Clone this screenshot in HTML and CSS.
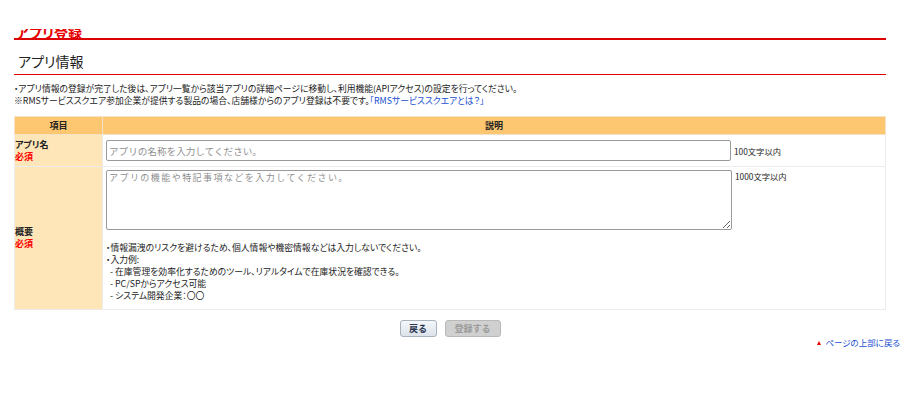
FILE: index.html
```html
<!DOCTYPE html>
<html lang="ja">
<head>
<meta charset="utf-8">
<title>アプリ登録</title>
<link rel="stylesheet" href="styles.css">
</head>
<body>
<div class="page">
  <div class="app-header"><h1 class="app-title">アプリ登録</h1></div>
  <h2 class="section-title">アプリ情報</h2>
  <div class="intro">
    <p>・アプリ情報の登録が完了した後は、アプリ一覧から該当アプリの詳細ページに移動し、利用機能(APIアクセス)の設定を行ってください。</p>
    <p>※RMSサービススクエア参加企業が提供する製品の場合、店舗様からのアプリ登録は不要です。<a class="link" href="#">「RMSサービススクエアとは？」</a></p>
  </div>
  <table class="form-table">
    <thead>
      <tr><th class="col-item">項目</th><th class="col-desc">説明</th></tr>
    </thead>
    <tbody>
      <tr class="row-name">
        <th class="label"><span class="lbl">アプリ名</span><span class="req">必須</span></th>
        <td class="field">
          <div class="field-line">
            <input class="text-input" type="text" placeholder="アプリの名称を入力してください。">
            <span class="limit">100文字以内</span>
          </div>
        </td>
      </tr>
      <tr class="row-summary">
        <th class="label"><span class="lbl">概要</span><span class="req">必須</span></th>
        <td class="field">
          <div class="field-line top">
            <textarea class="text-area" placeholder="アプリの機能や特記事項などを入力してください。"></textarea>
            <span class="limit">1000文字以内</span>
          </div>
          <ul class="notes">
            <li>・情報漏洩のリスクを避けるため、個人情報や機密情報などは入力しないでください。</li>
            <li>・入力例:</li>
            <li class="ex">- 在庫管理を効率化するためのツール、リアルタイムで在庫状況を確認できる。</li>
            <li class="ex">- PC/SPからアクセス可能</li>
            <li class="ex">- システム開発企業：〇〇</li>
          </ul>
        </td>
      </tr>
    </tbody>
  </table>
  <div class="actions">
    <button class="btn btn-back" type="button">戻る</button>
    <button class="btn btn-submit" type="button" disabled>登録する</button>
  </div>
</div>
<div class="pagetop"><a class="link" href="#"><span class="tri"></span>ページの上部に戻る</a></div>
</body>
</html>
```

FILE: styles.css
```css
html, body {
  margin: 0;
  padding: 0;
  background: #fff;
}
body {
  font-family: "Noto Sans CJK JP", "Liberation Sans", sans-serif;
  font-feature-settings: "palt";
  color: #222;
  font-size: 9px;
}
.page {
  width: 872px;
  margin-left: 14px;
}
.app-header {
  height: 9px;
  margin-top: 29px;
  overflow: hidden;
  display: flex;
  align-items: flex-end;
  border-bottom: 2px solid #dd0000;
}
.app-title {
  margin: 0 0 0 2px;
  font-size: 14px;
  line-height: 18px;
  color: #e60000;
  font-weight: bold;
  position: relative;
  top: 3px;
}
.section-title {
  margin: 0;
  padding: 12px 0 0 4px;
  height: 22px;
  font-size: 14px;
  line-height: 18px;
  font-weight: normal;
  color: #222;
  border-bottom: 1px solid #e00000;
}
.intro {
  padding-top: 8px;
}
.intro p {
  margin: 0;
  font-size: 8.8px;
  line-height: 12px;
  white-space: nowrap;
}
.link {
  color: #1a4fd0;
  text-decoration: none;
}
.form-table {
  width: 872px;
  margin-top: 9px;
  border-collapse: collapse;
  border: 1px solid #e6e6e6;
}
.form-table th, .form-table td {
  border: 1px solid #ececec;
  padding: 0;
}
.form-table thead th {
  background: #fdc670;
  font-weight: bold;
  font-size: 9px;
  height: 17px;
  line-height: 17px;
  text-align: center;
  border-color: #f3e3c6;
}
.col-item {
  width: 87px;
}
.label {
  background: #fee6b8;
  text-align: left;
  vertical-align: middle;
  font-weight: bold;
  padding: 0 0 0 4px;
}
.lbl, .req {
  display: block;
  font-size: 9px;
  line-height: 12px;
}
.row-name .label {
  vertical-align: top;
  padding-top: 4px;
}
.req {
  color: #ff0000;
}
.field {
  padding: 0 0 0 3px !important;
  vertical-align: top;
}
.row-name .field {
  height: 31px;
  vertical-align: middle;
}
.field-line {
  display: flex;
  align-items: center;
  gap: 3px;
}
.field-line.top {
  align-items: flex-start;
  padding-top: 3px;
}
.text-input {
  width: 625px;
  height: 21px;
  box-sizing: border-box;
  border: 1px solid #9a9a9a;
  border-radius: 2px;
  padding: 0 2px;
  font-family: "Noto Sans CJK JP", sans-serif;
  font-size: 9.6px;
  color: #333;
  margin: 0;
}
.text-area {
  width: 626px;
  height: 60px;
  box-sizing: border-box;
  border: 1px solid #9a9a9a;
  border-radius: 2px;
  padding: 1px 2px;
  font-family: "Noto Sans CJK JP", sans-serif;
  font-size: 9px;
  letter-spacing: 1.45px;
  line-height: 12px;
  color: #333;
  margin: 0;
  resize: both;
}
.text-input::placeholder, .text-area::placeholder {
  color: #8f8f8f;
}
.limit {
  font-size: 8.3px;
  line-height: 12px;
  white-space: nowrap;
}
.notes {
  list-style: none;
  margin: 12px 0 7px 0;
  padding: 0;
}
.notes li {
  font-size: 8.8px;
  line-height: 12px;
  white-space: nowrap;
}
.notes li.ex {
  padding-left: 4px;
}
.actions {
  display: flex;
  justify-content: center;
  gap: 8px;
  padding: 10px 0 0 0;
}
.btn {
  height: 17px;
  box-sizing: border-box;
  border-radius: 3px;
  padding: 0;
  font-family: "Noto Sans CJK JP", sans-serif;
  font-size: 9px;
  font-weight: bold;
  line-height: 15px;
  margin: 0;
}
.btn-back {
  width: 37px;
  border: 1px solid #a9b2bd;
  background: linear-gradient(#f4f7fa, #dce3ea);
  color: #2a3550;
}
.btn-submit {
  width: 56px;
  border: 1px solid #b9b9b9;
  background: #d0d0d0;
  color: #9a9a9a;
}
.pagetop {
  text-align: right;
  padding: 0 12px 0 0;
  margin-top: -1px;
  font-size: 8.5px;
  line-height: 12px;
}
.tri {
  display: inline-block;
  width: 0;
  height: 0;
  border-left: 2.5px solid transparent;
  border-right: 2.5px solid transparent;
  border-bottom: 4px solid #e00000;
  margin-right: 4px;
  vertical-align: 1px;
}
```
